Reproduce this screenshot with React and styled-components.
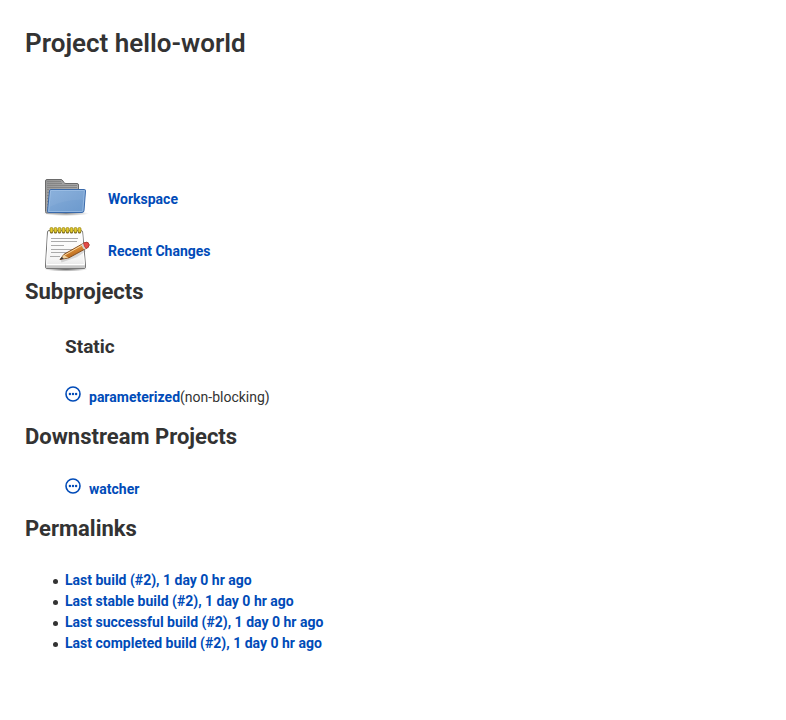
import React from "react";
import styled, { createGlobalStyle } from "styled-components";

const GlobalStyle = createGlobalStyle`
  *, *::before, *::after { box-sizing: border-box; }
  body {
    margin: 0;
    background: #fff;
    color: #333;
    font-family: Roboto, "Noto Sans", sans-serif;
    font-size: 14px;
    line-height: 21px;
  }
`;

const Page = styled.main`
  padding: 25px;
`;

const Title = styled.h1`
  margin: 0 0 113px;
  font-size: 26px;
  line-height: 36px;
  font-weight: 600;
`;

const Heading = styled.h2`
  margin: 0;
  font-size: 22px;
  line-height: 32px;
  font-weight: 700;
`;

const SubHeading = styled.h3`
  margin: 0 0 25px;
  font-size: 19px;
  line-height: 28px;
  font-weight: 700;
`;

const Link = styled.a`
  color: #004bb8;
  font-weight: 700;
  text-decoration: none;
  &:hover { text-decoration: underline; }
`;

const Summary = styled.nav`
  display: flex;
  flex-direction: column;
  gap: 2px;
  padding-left: 17px;
`;

const SummaryRow = styled.div`
  display: flex;
  align-items: center;
  gap: 18px;
  height: 50px;
`;

const SummaryIcon = styled.svg`
  width: 48px;
  height: 48px;
  flex: none;
`;

const Indented = styled.div`
  padding: 25px 0 12px 40px;
`;

const JobList = styled.ul`
  margin: 0;
  padding: 0;
  list-style: none;
`;

const Job = styled.li`
  display: flex;
  align-items: flex-start;
  line-height: 23px;
`;

const StatusIcon = styled.svg`
  width: 16px;
  height: 16px;
  margin-right: 8px;
  flex: none;
`;

const Permalinks = styled.ul`
  display: flex;
  flex-direction: column;
  margin: 25px 0 0;
  padding: 0 0 0 28px;
  list-style: none;
`;

const Permalink = styled.li`
  display: flex;
  align-items: center;
  gap: 7px;
  &::before {
    content: "";
    width: 5px;
    height: 5px;
    border-radius: 50%;
    background: #333;
    margin-top: 2px;
  }
`;

const permalinks = [
  "Last build (#2), 1 day 0 hr ago",
  "Last stable build (#2), 1 day 0 hr ago",
  "Last successful build (#2), 1 day 0 hr ago",
  "Last completed build (#2), 1 day 0 hr ago",
];

function FolderIcon() {
  return (
    <SummaryIcon viewBox="0 0 48 48" aria-hidden="true">
      <defs>
        <linearGradient id="folderBack" x1="0" y1="0" x2="1" y2="1">
          <stop offset="0" stopColor="#969696" />
          <stop offset="1" stopColor="#b8b8b8" />
        </linearGradient>
        <linearGradient id="folderFront" x1="0" y1="0" x2="1" y2="1">
          <stop offset="0" stopColor="#86aedb" />
          <stop offset="0.5" stopColor="#79a3d3" />
          <stop offset="1" stopColor="#6b99cd" />
        </linearGradient>
        <radialGradient id="folderShadow">
          <stop offset="0" stopColor="#000" stopOpacity="0.45" />
          <stop offset="1" stopColor="#000" stopOpacity="0" />
        </radialGradient>
      </defs>
      <ellipse cx="24" cy="38.5" rx="23" ry="2.5" fill="url(#folderShadow)" />
      <path d="M4.5 38Q3.5 38 3.5 36.5V6Q3.5 4.5 5 4.5H19Q20 4.5 21 6L22 7.7Q22.5 8.5 24 8.5H35Q36.5 8.5 36.5 10V37Z" fill="url(#folderBack)" stroke="#6a6a6a" />
      <path d="M5 6.5H19M5 8.5H20M5 10.5H35M5 12.5H35M5 14.5H7M5 17.5H7M5 20.5H7M5 23.5H7M5 26.5H6M5 29.5H6M5 32.5H6" stroke="#858585" strokeWidth="1" />
      <path d="M8.9 14.5H42.3Q43.6 14.5 43.5 15.8L42 35.5Q41.8 37.5 40.2 37.5H6.5Q5.4 37.5 5.5 36.2L7.5 16Q7.6 14.5 8.9 14.5Z" fill="url(#folderFront)" stroke="#3969aa" />
      <path d="M8.6 15.5H42.4L40.8 35.2Q40.6 36.5 39.7 36.5H6.6Z" fill="none" stroke="#b4d0ef" strokeOpacity="0.5" />
      <path d="M9 16.2H42L41 25C31 24 17 27 7.7 32Z" fill="#fff" opacity="0.05" />
    </SummaryIcon>
  );
}

function NotepadIcon() {
  const rings = [8, 12, 16, 20, 24, 28, 32, 36];
  return (
    <SummaryIcon viewBox="0 1 48 48" aria-hidden="true">
      <defs>
        <linearGradient id="paper" x1="0" y1="0" x2="0" y2="1">
          <stop offset="0" stopColor="#fff" />
          <stop offset="0.75" stopColor="#f5f5f5" />
          <stop offset="1" stopColor="#e0e0e0" />
        </linearGradient>
        <linearGradient id="pencil" x1="0" y1="0" x2="0.5" y2="1">
          <stop offset="0" stopColor="#f1c17a" />
          <stop offset="0.5" stopColor="#d98b35" />
          <stop offset="1" stopColor="#ad5d13" />
        </linearGradient>
        <radialGradient id="paperShadow">
          <stop offset="0" stopColor="#000" stopOpacity="0.65" />
          <stop offset="1" stopColor="#000" stopOpacity="0" />
        </radialGradient>
      </defs>
      <ellipse cx="24" cy="43" rx="22" ry="2.6" fill="url(#paperShadow)" />
      <path d="M7 4.5H39Q40.4 4.5 40.6 6L43.5 39V41Q43.5 42.5 42 42.5H5Q3.5 42.5 3.5 41V39L5.5 6Q5.6 4.5 7 4.5Z" fill="url(#paper)" stroke="#777" />
      <path d="M4 39.5H43V41Q43 42 42 42H5Q4 42 4 41Z" fill="#c7c7c7" />
      <path d="M6.6 6L4.6 38.5H42.4L39.6 6" fill="none" stroke="#fff" />
      <path d="M9 12.5H36M9 15.5H35M9 19.5H22M9 23.5H34M9 26.5H28M8 30.5H18" stroke="#aaa" />
      {rings.map((x) => (
        <g key={x}>
          <circle cx={x + 1.5} cy="6" r="1.6" fill="#5d5321" />
          <rect x={x} y="1.5" width="3" height="5" rx="1.4" fill="#e2ca2e" stroke="#9b8716" strokeWidth="0.8" />
        </g>
      ))}
      <path d="M19 35L34 30L43 24" fill="none" stroke="#000" strokeOpacity="0.13" strokeWidth="3" />
      <path d="M18 33.5L22 28.3L42 17Q44.4 15.6 46.2 16.8Q48 18.8 46.2 21.3L27 31.8Z" fill="url(#pencil)" stroke="#7b461a" strokeWidth="0.9" />
      <path d="M18.4 33.2L22.2 28.5Q23 30.5 26.5 31.4Z" fill="#f1d5a1" />
      <path d="M17.8 33.7L20 30.8Q20.4 32.1 22 32.6Z" fill="#353535" />
      <path d="M23 28.9L41 18.7" stroke="#f7d7a0" strokeWidth="1" />
      <path d="M39.5 18.3L41.6 17.1Q42 20.5 44 22.5L42 23.6Q40 21.5 39.5 18.3Z" fill="#d5d5cf" />
      <path d="M41.6 17.1Q44.4 15.7 46.1 16.8Q48 18.8 46.2 21.2L44 22.5Q42 20.5 41.6 17.1Z" fill="#e44c48" stroke="#b63432" strokeWidth="0.7" />
    </SummaryIcon>
  );
}

function NotBuiltIcon() {
  return (
    <StatusIcon viewBox="0 0 16 16" role="img" aria-label="Not built">
      <circle cx="8" cy="8" r="7" fill="none" stroke="#004bb8" strokeWidth="1.6" />
      <circle cx="4.9" cy="8" r="1.2" fill="#004bb8" />
      <circle cx="8" cy="8" r="1.2" fill="#004bb8" />
      <circle cx="11.1" cy="8" r="1.2" fill="#004bb8" />
    </StatusIcon>
  );
}

export default function App() {
  return (
    <>
      <GlobalStyle />
      <Page>
        <Title>Project hello-world</Title>
        <Summary>
          <SummaryRow>
            <FolderIcon />
            <Link href="#workspace">Workspace</Link>
          </SummaryRow>
          <SummaryRow>
            <NotepadIcon />
            <Link href="#changes">Recent Changes</Link>
          </SummaryRow>
        </Summary>
        <Heading>Subprojects</Heading>
        <Indented>
          <SubHeading>Static</SubHeading>
          <JobList>
            <Job>
              <NotBuiltIcon />
              <Link href="#parameterized">parameterized</Link>
              <span>(non-blocking)</span>
            </Job>
          </JobList>
        </Indented>
        <Heading>Downstream Projects</Heading>
        <Indented>
          <JobList>
            <Job>
              <NotBuiltIcon />
              <Link href="#watcher">watcher</Link>
            </Job>
          </JobList>
        </Indented>
        <Heading>Permalinks</Heading>
        <Permalinks>
          {permalinks.map((label) => (
            <Permalink key={label}>
              <Link href="#build-2">{label}</Link>
            </Permalink>
          ))}
        </Permalinks>
      </Page>
    </>
  );
}
